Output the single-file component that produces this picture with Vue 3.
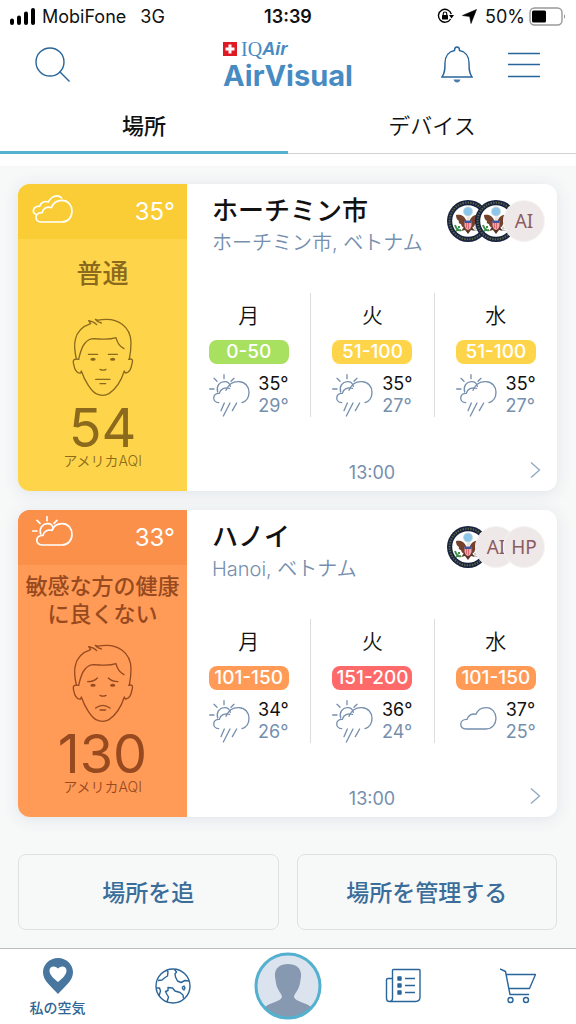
<script setup>
import { ref } from 'vue'

const activeTab = ref('places')

const cards = [
  {
    city: 'ホーチミン市',
    region: 'ホーチミン市, ベトナム',
    tone: 'moderate',
    icon: 'clouds',
    temp: '35°',
    level: '普通',
    aqi: 54,
    time: '13:00',
    sources: ['seal', 'seal', 'AI'],
    days: [
      { name: '月', range: '0-50', tone: 'green', icon: 'rain', high: '35°', low: '29°' },
      { name: '火', range: '51-100', tone: 'yellow', icon: 'rain', high: '35°', low: '27°' },
      { name: '水', range: '51-100', tone: 'yellow', icon: 'rain', high: '35°', low: '27°' }
    ]
  },
  {
    city: 'ハノイ',
    region: 'Hanoi, ベトナム',
    tone: 'sensitive',
    icon: 'sun',
    temp: '33°',
    level: '敏感な方の健康に良くない',
    aqi: 130,
    time: '13:00',
    sources: ['seal', 'AI', 'HP'],
    days: [
      { name: '月', range: '101-150', tone: 'orange', icon: 'rain', high: '34°', low: '26°' },
      { name: '火', range: '151-200', tone: 'red', icon: 'rain', high: '36°', low: '24°' },
      { name: '水', range: '101-150', tone: 'orange', icon: 'cloud', high: '37°', low: '25°' }
    ]
  }
]
</script>

<template>
  <div class="page">
    <svg class="sprite" aria-hidden="true">
      <symbol id="wx-sun" viewBox="0 0 123 129">
        <path d="M26 54C21 36 32 24 45 23C55 22 62 29 64 37M45 2V14M15 13L24 22M75 13L66 22M2 45H15" />
      </symbol>
      <symbol id="wx-cloud" viewBox="0 0 123 129">
        <path d="M30 87C8 87 9 57 33 58C36 45 49 40 60 43C66 28 78 23 90 23C109 23 120 38 120 55C120 73 108 87 90 87Z" />
      </symbol>
      <symbol id="wx-rain" viewBox="0 0 123 129">
        <path d="M29 86C8 84 10 57 31 58C34 45 47 39 62 43M51 49C58 32 72 22 90 23C109 24 120 38 120 55C120 71 112 82 99 86" />
        <path d="M46 87L36 110M63 87L43 126M83 87L70 110" />
      </symbol>
      <symbol id="wx-clouds" viewBox="0 0 123 129">
        <path d="M27 96C6 96 7 67 30 68C34 53 46 49 58 53C64 37 76 31 90 31C108 31 120 46 120 63C120 82 108 96 90 96Z" />
        <path d="M11 73C-2 68 4 46 23 49C27 36 39 32 49 36C59 17 78 13 89 24" />
      </symbol>
      <symbol id="seal" viewBox="0 0 42 42">
        <circle cx="21" cy="21" r="21" fill="#17223f" />
        <circle cx="21" cy="21" r="18.4" fill="none" stroke="#5e6746" stroke-width="2" stroke-dasharray="1.4 1.2" />
        <circle cx="21" cy="21" r="15.8" fill="#fff" />
        <path d="M19 20C17 15 13 14 9 15C9 18 10 20 12 21C11 23 13 24 14 24C14 26 16 27 17 28L20 28ZM23 20C25 15 29 14 33 15C33 18 32 20 30 21C31 23 29 24 28 24C28 26 26 27 25 28L22 28Z" fill="#74412c" />
        <path d="M18 26L14 31L18 30L21 34L24 30L28 31L24 26Z" fill="#5c3426" />
        <circle cx="21" cy="11.500" r="4.5" fill="#8cc6ec" stroke="#c2d7d0" stroke-width=".8" />
        <path d="M19.500 18L21 16L24 17L22.500 20H20Z" fill="#e9e6e0" />
        <path d="M17.500 21H24.500V26Q24 29 21 30Q18 29 17.500 26Z" fill="#f0a7b0" />
        <path d="M17.500 20.500H24.500V23H17.500Z" fill="#40549b" />
        <path d="M19.500 23V28M21.500 23V29" stroke="#d25a66" stroke-width=".8" />
        <path d="M14 30C11 31 9 28 8 25M12 29L9 31M12 28V26" stroke="#3e914a" stroke-width="2" fill="none" />
        <path d="M27 28L32 25M27 29L33 28M27 30L32 31" stroke="#a7a9a4" stroke-width=".8" />
      </symbol>
    </svg>

    <div class="status">
      <div class="status-left">
        <svg width="26" height="17" viewBox="0 0 26 17" aria-hidden="true">
          <path d="M2 12.5V15M9 9.5V15M16 5.5V15M23 2V15" stroke="#000" stroke-width="4" stroke-linecap="round" />
        </svg>
        <span>MobiFone</span>
        <span class="network">3G</span>
      </div>
      <strong>13:39</strong>
      <div class="status-right">
        <svg width="17" height="16" viewBox="0 0 17 16" aria-hidden="true">
          <path d="M14.3 6.2A6.5 6.5 0 1 0 13.6 11" fill="none" stroke="#000" stroke-width="1.4" />
          <path d="M12 7H17L14.5 10.5Z" />
          <rect x="5" y="7" width="6" height="4.6" rx=".6" />
          <path d="M6.2 7V5.8A1.8 1.8 0 0 1 9.8 5.8V7" fill="none" stroke="#000" stroke-width="1.1" />
        </svg>
        <svg class="arrow" width="15" height="15" viewBox="0 0 15 15" aria-hidden="true">
          <path d="M14.5 .5L9 14.5L7.700 7.5L.5 6.5Z" stroke="#000" stroke-width=".6" />
        </svg>
        <span>50%</span>
        <svg width="37" height="19" viewBox="0 0 37 19" aria-hidden="true">
          <rect x="1" y="1" width="32" height="17" rx="4.5" fill="none" stroke="#999" stroke-width="1.4" />
          <rect x="3" y="3.5" width="14" height="12" rx="1.5" />
          <path d="M35 7Q37 9.500 35 12Z" fill="#888" />
        </svg>
      </div>
    </div>

    <header class="header">
      <button class="icon-btn search" type="button" aria-label="検索">
        <svg width="36" height="36" viewBox="0 0 36 36"><circle cx="15" cy="15" r="14" /><path d="M24.500 24.500L34.500 34.500" /></svg>
      </button>
      <div class="logo">
        <div class="logo-top">
          <svg width="14" height="14" viewBox="0 0 14 14" aria-hidden="true"><path d="M0 0H14V14H0Z" fill="#df1a22" /><path d="M7 2.500V11.500M2.500 7H11.500" stroke="#fff" stroke-width="3" /></svg>
          <span class="iq">IQ</span><span class="air">Air</span>
        </div>
        <div class="logo-name">AirVisual</div>
      </div>
      <div class="header-actions">
        <button class="icon-btn" type="button" aria-label="通知">
          <svg width="32" height="38" viewBox="0 0 32 38">
            <path d="M1 31C4 27 4 23 4 17C4 10 8 5.500 13.500 4.500C13.500 2 14.500 1 16 1S18.500 2 18.500 4.500C24 5.500 28 10 28 17C28 23 28 27 31 31Z" />
            <path class="solid" d="M12.500 33.500H19.500Q18.500 36.500 16 36.500T12.500 33.500Z" />
          </svg>
        </button>
        <button class="icon-btn" type="button" aria-label="メニュー">
          <svg width="34" height="26" viewBox="0 0 34 26"><path d="M1 1.500H33M1 12.500H33M1 24.500H33" /></svg>
        </button>
      </div>
    </header>

    <div class="tabs" role="tablist">
      <button type="button" role="tab" :aria-selected="activeTab === 'places'" :class="{ active: activeTab === 'places' }" @click="activeTab = 'places'">場所</button>
      <button type="button" role="tab" :aria-selected="activeTab === 'devices'" :class="{ active: activeTab === 'devices' }" @click="activeTab = 'devices'">デバイス</button>
    </div>

    <main class="content">
      <div class="cards">
        <article v-for="card in cards" :key="card.city" class="card">
          <section class="aqi" :class="card.tone">
            <div class="now">
              <svg class="wx" aria-hidden="true">
                <template v-if="card.icon === 'sun'"><use href="#wx-sun" /><use href="#wx-cloud" /></template>
                <use v-else href="#wx-clouds" />
              </svg>
              <span>{{ card.temp }}</span>
            </div>
            <div class="level" :class="{ short: card.level.length < 4 }">{{ card.level }}</div>
            <svg class="face" width="62" height="80" viewBox="0 0 186 240" aria-hidden="true">
              <path d="M13 126C8 104 6 84 10 68C15 42 32 28 56 20L50 11Q66 14 74 23M88 18Q76 16 70 7Q76 11 90 8C136 2 176 28 177 76Q177 104 172 126" />
              <path d="M20 126C24 112 27 94 37 81C44 71 54 65 66 65C90 66 110 70 132 62C135 76 143 88 156 95" />
              <path d="M20 127C4 124 2 130 5 142C8 158 13 170 26 168L28 162C38 192 58 222 72 230C84 236 100 236 111 230C130 217 148 190 157 162L160 168C174 168 178 154 180 140C184 128 180 124 170 127" />
              <ellipse cx="63" cy="127" rx="8" ry="4.500" />
              <ellipse cx="122" cy="127" rx="8" ry="4.500" />
              <path d="M84 157Q93 162 102 157" />
              <path v-if="card.tone === 'moderate'" d="M49 112H77M109 112H136M71 187H114M84 200H101" />
              <path v-else d="M47 116Q66 116 76 105M109 105Q120 116 138 116M71 195Q92 179 114 195M84 201H101" />
            </svg>
            <div class="value">{{ card.aqi }}</div>
            <div class="unit">アメリカAQI</div>
          </section>
          <section class="info">
            <div class="info-head">
              <div>
                <h2>{{ card.city }}</h2>
                <p>{{ card.region }}</p>
              </div>
              <div class="sources">
                <template v-for="(source, i) in card.sources" :key="i">
                  <svg v-if="source === 'seal'" class="source" aria-hidden="true"><use href="#seal" /></svg>
                  <span v-else class="source initials">{{ source }}</span>
                </template>
              </div>
            </div>
            <div class="forecast">
              <div v-for="day in card.days" :key="day.name" class="day">
                <div class="day-name">{{ day.name }}</div>
                <div class="range" :class="day.tone">{{ day.range }}</div>
                <div class="day-weather">
                  <svg class="wx" aria-hidden="true">
                    <use v-if="day.icon === 'rain'" href="#wx-sun" />
                    <use :href="'#wx-' + day.icon" />
                  </svg>
                  <div class="temps">
                    <div>{{ day.high }}</div>
                    <div class="low">{{ day.low }}</div>
                  </div>
                </div>
              </div>
            </div>
            <div class="card-foot">
              <time>{{ card.time }}</time>
              <button class="more" type="button" :aria-label="card.city + 'の詳細'">
                <svg width="12" height="18" viewBox="0 0 12 18"><path d="M2 1.500L10.500 9L2 16.500" /></svg>
              </button>
            </div>
          </section>
        </article>
      </div>
      <div class="actions">
        <button type="button">場所を追</button>
        <button type="button">場所を管理する</button>
      </div>
    </main>

    <nav class="bottom">
      <a href="#air" class="current">
        <svg width="32" height="38" viewBox="0 0 32 38" aria-hidden="true">
          <path class="pin" d="M16 1C7.500 1 1 7.500 1 15.500C1 24 10 30 16 37C22 30 31 24 31 15.500C31 7.500 24.500 1 16 1Z" />
          <path class="heart" d="M16 25C11 21 7.500 17.500 7.500 13.500C7.500 9 13 8 16 11.500C19 8 24.500 9 24.500 13.500C24.500 17.500 21 21 16 25Z" />
        </svg>
        <span>私の空気</span>
      </a>
      <a href="#map" aria-label="マップ">
        <svg width="36" height="36" viewBox="0 0 36 36">
          <circle cx="18" cy="18" r="17" />
          <path d="M3 12.500L7 12L10 9.500L12.500 8L13 4L12 2.500M19.500 1.500L21.500 4L20 6L20.500 9L22.500 13L26 14.500L30 12.500L34 13M1.500 20L4.500 20L5.500 23L4 28M12 34L13.500 29L12 26.500L10.500 23.500L13 22.500L13 19.500L17.500 20L20 23L25 24.500L28 27L28.500 30.500M27.500 19L29 18L30 20L29 22L27.500 20.500Z" />
        </svg>
      </a>
      <a href="#profile" class="profile" aria-label="プロフィール">
        <svg width="68" height="68" viewBox="0 0 68 68">
          <circle class="backdrop" cx="34" cy="34" r="32" />
          <path class="person" d="M11 55C17 50 26 50 28 45C28 42 23 38 22 31L21 25C20 16 26 12 34 12S48 16 47 25L46 31C45 38 40 42 40 45C42 50 51 50 57 55A31 31 0 0 1 11 55Z" />
          <circle class="ring" cx="34" cy="34" r="32" />
        </svg>
      </a>
      <a href="#news" aria-label="ニュース">
        <svg width="36" height="36" viewBox="0 0 36 36">
          <path d="M7.500 30V2.500Q7.500 1.500 8.500 1.500H34Q35 1.500 35 2.500V29Q35 33.500 30.500 33.500H4.500Q1.500 33.500 1.500 30.500V12Q1.500 10.500 3 10.500H7.500M7.500 30Q7.500 33.500 4.500 33.500" />
          <path d="M20 10.500H30M20 17.500H30M20 24.500H30" />
          <path class="solid" d="M13 9H16V12H13ZM13 16H16V19H13ZM13 23H16V26H13Z" />
        </svg>
      </a>
      <a href="#shop" aria-label="ショップ">
        <svg width="36" height="36" viewBox="0 0 36 36">
          <path d="M0 1L5.500 3.500L10 26.500H29M6.500 6.500H35.500L29.500 20.500H9" />
          <circle cx="10.500" cy="32" r="2.500" /><circle cx="26" cy="32" r="2.500" />
        </svg>
      </a>
    </nav>
  </div>
</template>

<style>
body {
  background: #fff;
}
</style>

<style scoped>
.page {
  display: flex;
  flex-direction: column;
  min-height: 100vh;
  background: #fff;
  color: #111;
  font-family: Inter, "Noto Sans CJK JP", sans-serif;
}
.page * {
  box-sizing: border-box;
}
button {
  padding: 0;
  border: 0;
  background: none;
  font: inherit;
  color: inherit;
  cursor: pointer;
}
.sprite {
  position: absolute;
  width: 0;
  height: 0;
}
.status {
  display: grid;
  grid-template-columns: 1fr auto 1fr;
  align-items: center;
  height: 32px;
  padding: 0 10px;
  font-size: 18px;
}
.status strong {
  font-weight: 600;
}
.status-left,
.status-right {
  display: flex;
  align-items: center;
  gap: 6px;
}
.network {
  margin-left: 8px;
}
.status-right {
  justify-content: flex-end;
  gap: 4px;
}
.arrow {
  margin: 0 4px;
}
.header {
  display: grid;
  grid-template-columns: 1fr auto 1fr;
  align-items: center;
  height: 66px;
  padding: 0 35px;
}
.icon-btn {
  display: flex;
}
.icon-btn svg {
  fill: none;
  stroke: #2a659a;
  stroke-width: 1.4;
}
.icon-btn .solid {
  fill: #4c7dac;
  stroke: none;
}
.header-actions {
  display: flex;
  align-items: center;
  justify-content: flex-end;
  gap: 34px;
}
.logo {
  padding-top: 3px;
  color: #478bc3;
}
.logo-top {
  display: flex;
  align-items: center;
  height: 18px;
  font-size: 20px;
}
.iq {
  margin-left: 4px;
  font-family: "Liberation Serif", serif;
}
.air {
  font-family: "Liberation Sans", Arial, sans-serif;
  font-style: italic;
  font-weight: 700;
  font-size: 18px;
}
.logo-name {
  font-size: 29px;
  font-weight: 700;
  line-height: 35px;
}
.tabs {
  display: grid;
  grid-template-columns: 1fr 1fr;
  height: 56px;
  font-size: 22px;
}
.tabs button {
  padding-bottom: 4px;
  border-bottom: 1px solid #d2d2d2;
  font-weight: 350;
}
.tabs .active {
  padding-bottom: 2px;
  border-bottom: 3px solid #54b1cf;
  font-weight: 500;
}
.content {
  flex: 1;
  margin-top: 12px;
  padding: 18px 19px 18px 18px;
  background: #f7f8f8;
}
.cards {
  display: grid;
  gap: 19px;
}
.card {
  display: grid;
  grid-template-columns: 169px 1fr;
  overflow: hidden;
  border-radius: 12px;
  background: #fff;
  box-shadow: 0 2px 16px #dfe4e9;
}
.aqi {
  display: flex;
  flex-direction: column;
  align-items: center;
}
.moderate {
  background: #fed54a;
  color: #8c6a1d;
}
.sensitive {
  background: #ff9b57;
  color: #974a20;
}
.now {
  display: flex;
  align-items: center;
  justify-content: space-between;
  align-self: stretch;
  height: 55px;
  padding: 0 12px 0 14px;
  color: #fff;
  font-size: 24px;
}
.moderate .now {
  background: #facd36;
}
.sensitive .now {
  background: #fa904a;
}
.wx {
  width: 41px;
  height: 43px;
  overflow: visible;
  fill: none;
  stroke: currentColor;
  stroke-width: 4;
  stroke-linecap: round;
  stroke-linejoin: round;
}
.now .wx {
  stroke-width: 5;
}
.level {
  display: flex;
  align-items: center;
  height: 70px;
  padding: 0 7px;
  font-size: 22px;
  font-weight: 500;
  line-height: 28px;
  text-align: center;
}
.level.short {
  font-size: 26px;
}
.face {
  margin-top: 8px;
  fill: none;
  stroke: currentColor;
  stroke-width: 4;
  stroke-linecap: round;
  stroke-linejoin: round;
}
.face ellipse {
  fill: currentColor;
  stroke: none;
}
.value {
  margin-top: 7px;
  font-size: 54px;
  line-height: 48px;
}
.unit {
  font-size: 14px;
  font-weight: 350;
  line-height: 18px;
}
.info {
  min-width: 0;
}
.info-head {
  display: flex;
  justify-content: space-between;
  padding: 9px 12px 0 25px;
}
h2,
p {
  margin: 0;
}
h2 {
  font-size: 26px;
  font-weight: 500;
  line-height: 36px;
}
p {
  color: #768fae;
  font-size: 20px;
  font-weight: 350;
  line-height: 28px;
}
.sources {
  display: flex;
  margin-top: 7px;
}
.source {
  width: 42px;
  height: 42px;
}
.source + .source {
  margin-left: -14px;
}
.initials {
  display: flex;
  align-items: center;
  justify-content: center;
  border: 1px solid #f7f3f3;
  border-radius: 50%;
  background: #eee8e9;
  color: #8c5c61;
  font-family: "Noto Sans", sans-serif;
  font-size: 19px;
}
.forecast {
  display: grid;
  grid-template-columns: repeat(3, 1fr);
  margin-top: 36px;
}
.day {
  display: flex;
  flex-direction: column;
  align-items: center;
  padding-top: 8px;
}
.day + .day {
  border-left: 1px solid #dcdde0;
}
.day-name {
  font-size: 21px;
  font-weight: 350;
  line-height: 30px;
}
.range {
  width: 80px;
  margin-top: 9px;
  border-radius: 8px;
  color: #fff;
  font-size: 19px;
  font-weight: 500;
  line-height: 24px;
  text-align: center;
}
.green {
  background: #a8e05f;
}
.yellow {
  background: #fed54a;
}
.orange {
  background: #ff9b57;
}
.red {
  background: #fe6a69;
}
.day-weather {
  display: flex;
  align-items: center;
  justify-content: space-between;
  width: 80px;
  margin-top: 9px;
}
.day-weather .wx {
  flex: none;
  color: #768fae;
}
.temps {
  font-size: 18px;
  line-height: 22px;
}
.low {
  color: #768fae;
}
.card-foot {
  display: grid;
  grid-template-columns: 1fr auto 1fr;
  align-items: center;
  height: 38px;
  margin-top: 36px;
  padding: 0 16px;
}
.card-foot time {
  grid-column: 2;
  color: #768fae;
  font-size: 18px;
}
.more {
  display: flex;
  justify-self: end;
  padding-bottom: 4px;
}
.more svg {
  fill: none;
  stroke: #92abc0;
  stroke-width: 1.4;
}
.actions {
  display: grid;
  grid-template-columns: 1fr 1fr;
  gap: 18px;
  margin-top: 37px;
}
.actions button {
  height: 76px;
  padding-bottom: 2px;
  border: 1px solid #dfe1e2;
  border-radius: 8px;
  color: #3b6d9a;
  font-size: 23px;
  font-weight: 500;
}
.bottom {
  display: grid;
  grid-template-columns: repeat(5, 1fr);
  height: 76px;
  border-top: 1px solid #bdbdbd;
}
.bottom a {
  display: flex;
  flex-direction: column;
  align-items: center;
  justify-content: center;
  padding-bottom: 1px;
  color: #2f6594;
  font-size: 14px;
  font-weight: 500;
  line-height: 18px;
  text-decoration: none;
}
.bottom svg {
  fill: none;
  stroke: #2a659a;
  stroke-width: 1.4;
  stroke-linejoin: round;
}
.bottom .current {
  gap: 4px;
  padding-bottom: 0;
}
.bottom .pin {
  fill: #49769f;
  stroke: none;
}
.bottom .heart {
  fill: #fff;
  stroke: none;
}
.bottom .solid {
  fill: #2a659a;
}
.bottom .backdrop {
  fill: #dbe4ee;
  stroke: none;
}
.bottom .person {
  fill: #8799b1;
  stroke: none;
}
.bottom .ring {
  stroke: #53b1cf;
  stroke-width: 3;
}
</style>
